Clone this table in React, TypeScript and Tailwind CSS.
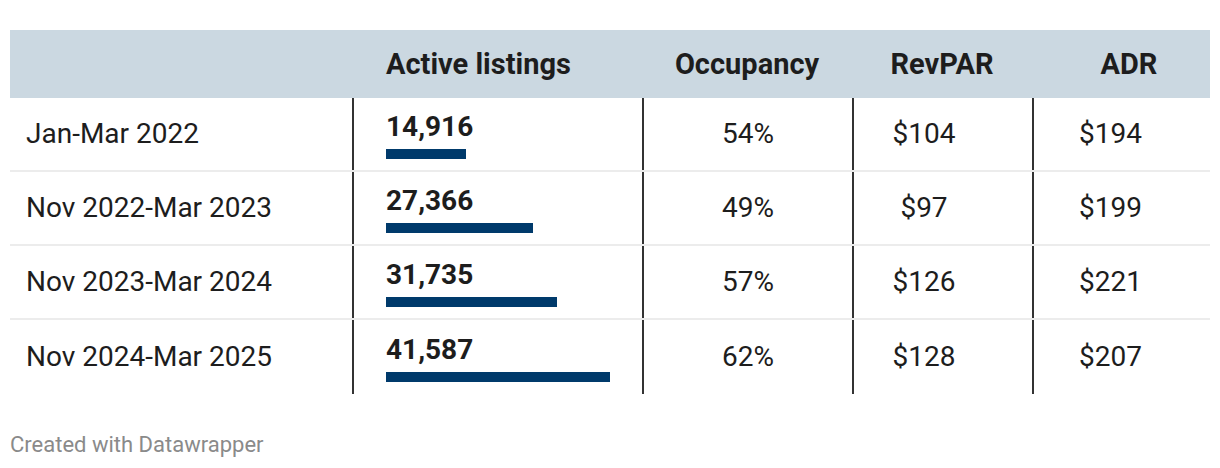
import * as React from 'react'

interface Row {
  period: string
  listings: number
  occupancy: string
  revpar: string
  adr: string
}

const rows: Row[] = [
  { period: 'Jan-Mar 2022', listings: 14916, occupancy: '54%', revpar: '$104', adr: '$194' },
  { period: 'Nov 2022-Mar 2023', listings: 27366, occupancy: '49%', revpar: '$97', adr: '$199' },
  { period: 'Nov 2023-Mar 2024', listings: 31735, occupancy: '57%', revpar: '$126', adr: '$221' },
  { period: 'Nov 2024-Mar 2025', listings: 41587, occupancy: '62%', revpar: '$128', adr: '$207' },
]

const maxListings = Math.max(...rows.map((r) => r.listings))
const BAR_MAX = 224

const cols = 'grid grid-cols-[342px_290px_210px_180px_178px]'

export default function App() {
  return (
    <div className="min-h-screen bg-white px-[10px] pt-[30px] font-['Roboto',sans-serif] text-[#1d1d1d]">
      <div className="w-[1200px]">
        <div className={`${cols} h-[68px] items-center bg-[#cbd8e1] text-[29px] font-bold leading-[29px]`}>
          <div />
          <div className="pl-[34px]">Active listings</div>
          <div className="text-center">Occupancy</div>
          <div className="text-center">RevPAR</div>
          <div className="pl-[16px] text-center">ADR</div>
        </div>

        {rows.map((row, index) => (
          <div
            key={row.period}
            className={`${cols} h-[74px] text-[28px] leading-[28px] ${
              index < rows.length - 1 ? 'border-b-2 border-[#ececec]' : ''
            }`}
          >
            <div className="flex items-center pl-4">{row.period}</div>
            <div className="flex flex-col justify-center border-l-2 border-[#333333] pl-8 pt-[3px]">
              <div className="font-bold">{row.listings.toLocaleString('en-US')}</div>
              <div
                className="mt-[8px] h-[10px] bg-[#003a6b]"
                style={{ width: (row.listings / maxListings) * BAR_MAX }}
              />
            </div>
            <div className="flex items-center justify-center border-l-2 border-[#333333]">
              {row.occupancy}
            </div>
            <div className="flex items-center justify-center border-l-2 border-[#333333] pr-[38px]">
              {row.revpar}
            </div>
            <div className="flex items-center justify-center border-l-2 border-[#333333] pr-[23px]">
              {row.adr}
            </div>
          </div>
        ))}
      </div>

      <p className="mt-[40px] text-[22px] leading-[22px] text-[#8a8a8a]">
        Created with Datawrapper
      </p>
    </div>
  )
}
